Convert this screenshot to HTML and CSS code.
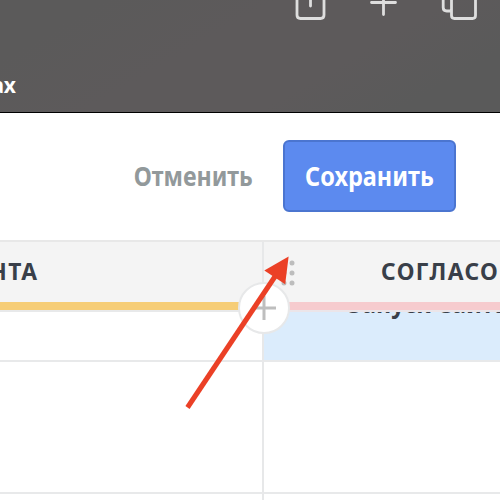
FILE: index.html
```html
<!DOCTYPE html>
<html lang="ru">
<head>
<meta charset="utf-8">
<title>Доска</title>
<link rel="stylesheet" href="styles.css">
</head>
<body>
<header class="topbar">
  <svg class="tools" width="220" height="40" viewBox="280 0 220 40" aria-hidden="true">
    <path d="M297 -8V15q0 3.500 3.500 3.500h20q3.500 0 3.500 -3.500V-8M310.500 -8V6M371.500 2.500H395.500M383.500 -10V14.500M451.500 -8V15.500q0 3 3 3h18q3 0 3 -3V-8M443.200 -8V7.500q0 3.500 3.500 3.500H450"/>
  </svg>
  <p class="crumb"><span>ах</span></p>
</header>
<section class="actions">
  <button class="btn cancel"><span>Отменить</span></button>
  <button class="btn save"><span>Сохранить</span></button>
</section>
<main class="board">
  <div class="head left"><span class="title client">КЛИЕНТА</span></div>
  <div class="head right">
    <svg class="grip" width="14" height="28" viewBox="0 0 14 28" aria-hidden="true"><path d="M3 4h0M11 4h0M3 14h0M11 14h0M3 24h0M11 24h0"/></svg>
    <span class="title agree">СОГЛАСО</span>
  </div>
  <div class="cell"></div>
  <div class="cell active"><span class="task">Запуск Сайта</span></div>
  <div class="cell"></div>
  <div class="cell"></div>
  <div class="cell last"></div>
  <div class="cell last"></div>
  <button class="add" aria-label="+"><svg width="24" height="24" viewBox="0 0 24 24"><path d="M0 12H24M12 0V24"/></svg></button>
</main>
<svg class="arrow" width="500" height="500" viewBox="0 0 500 500" aria-hidden="true">
  <path class="shaft" d="M187.500 407.500L276 275"/>
  <path class="tip" d="M288.600 256.500L264.300 270.500L285.200 284.300Z"/>
</svg>
</body>
</html>
```
FILE: styles.css
```css
* { box-sizing: border-box; }
body {
  margin: 0;
  width: 500px;
  height: 500px;
  overflow: hidden;
  background: #fff;
  font-family: "Noto Sans", "Open Sans", sans-serif;
  font-weight: 700;
  position: relative;
}
span { display: inline-block; white-space: nowrap; }
.topbar {
  height: 113px;
  border-bottom: 1px solid #000;
  background: linear-gradient(150deg, #5b5a5a 15%, #5d5a5b 40%, #5d5a5b 65%, #5a5a5a 85%);
  display: flex;
  flex-direction: column;
  overflow: hidden;
}
.tools { align-self: flex-end; display: block; fill: none; stroke: #dedede; stroke-width: 2.8; stroke-linecap: round; }
.crumb { margin: 32px 0 0; color: #fff; font-size: 21px; line-height: 26px; width: 16px; display: flex; justify-content: flex-end; }
.crumb span { letter-spacing: .4px; margin-right: -.4px; }
.actions { height: 127px; padding: 27px 44px 0 0; display: flex; justify-content: flex-end; }
.btn { font: inherit; font-size: 27px; line-height: 36px; padding: 0; height: 72px; border: 0; background: none; display: flex; align-items: center; justify-content: center; }
.cancel { width: 120px; margin-right: 30px; color: #92999b; }
.save { width: 173px; color: #fff; background: #5c8aef; border: 2px solid #4b75d0; border-radius: 6px; }
.cancel span { transform: scaleX(.86); }
.save span { transform: translateX(-.5px) scaleX(.87); }
.board {
  position: relative;
  height: 260px;
  border-top: 2px solid #e8e8e8;
  display: grid;
  grid-template-columns: 264px 236px;
  grid-template-rows: 70px 50px 132px 6px;
}
.head { background: #f4f4f4; border-bottom: 2px solid #e8e9ea; display: flex; align-items: center; color: #393f49; font-size: 24px; line-height: 30px; letter-spacing: 1.5px; padding-bottom: 2px; }
.left { box-shadow: inset 0 -8px #f6cd76; border-right: 2px solid #e7e8e9; justify-content: flex-end; padding-right: 224px; }
.right { box-shadow: inset 0 -8px #f6cbce; padding-left: 17px; border-bottom-color: #ebe5e9; }
.title { flex: none; padding-bottom: 9px; }
.client { transform: scaleX(.95); transform-origin: right; }
.agree { transform: scaleX(.95); transform-origin: left; margin-left: 86px; }
.grip { flex: none; margin-bottom: 5px; stroke: #bdbdbd; stroke-width: 5px; stroke-linecap: round; }
.cell { border-bottom: 2px solid #e8e9ea; border-right: 2px solid #e7e8e9; overflow: hidden; }
.cell:nth-child(even) { border-right: 0; }
.last { border-bottom: 0; }
.active { background: #dbecfc; padding-left: 84px; display: flex; align-items: flex-start; }
.task { flex: none; font-size: 25px; line-height: 30px; color: #393f49; margin-top: -24px; transform: scaleX(.94); transform-origin: left; }
.add { position: absolute; left: 238px; top: 40px; width: 52px; height: 52px; padding: 0; border: 2px solid #e7e8e9; border-radius: 50%; background: #fff; display: flex; align-items: center; justify-content: center; }
.add svg { stroke: #bebebe; stroke-width: 3; }
.arrow { position: absolute; inset: 0; }
.shaft { stroke: #eb4026; stroke-width: 5; }
.tip { fill: #eb4026; }
```
